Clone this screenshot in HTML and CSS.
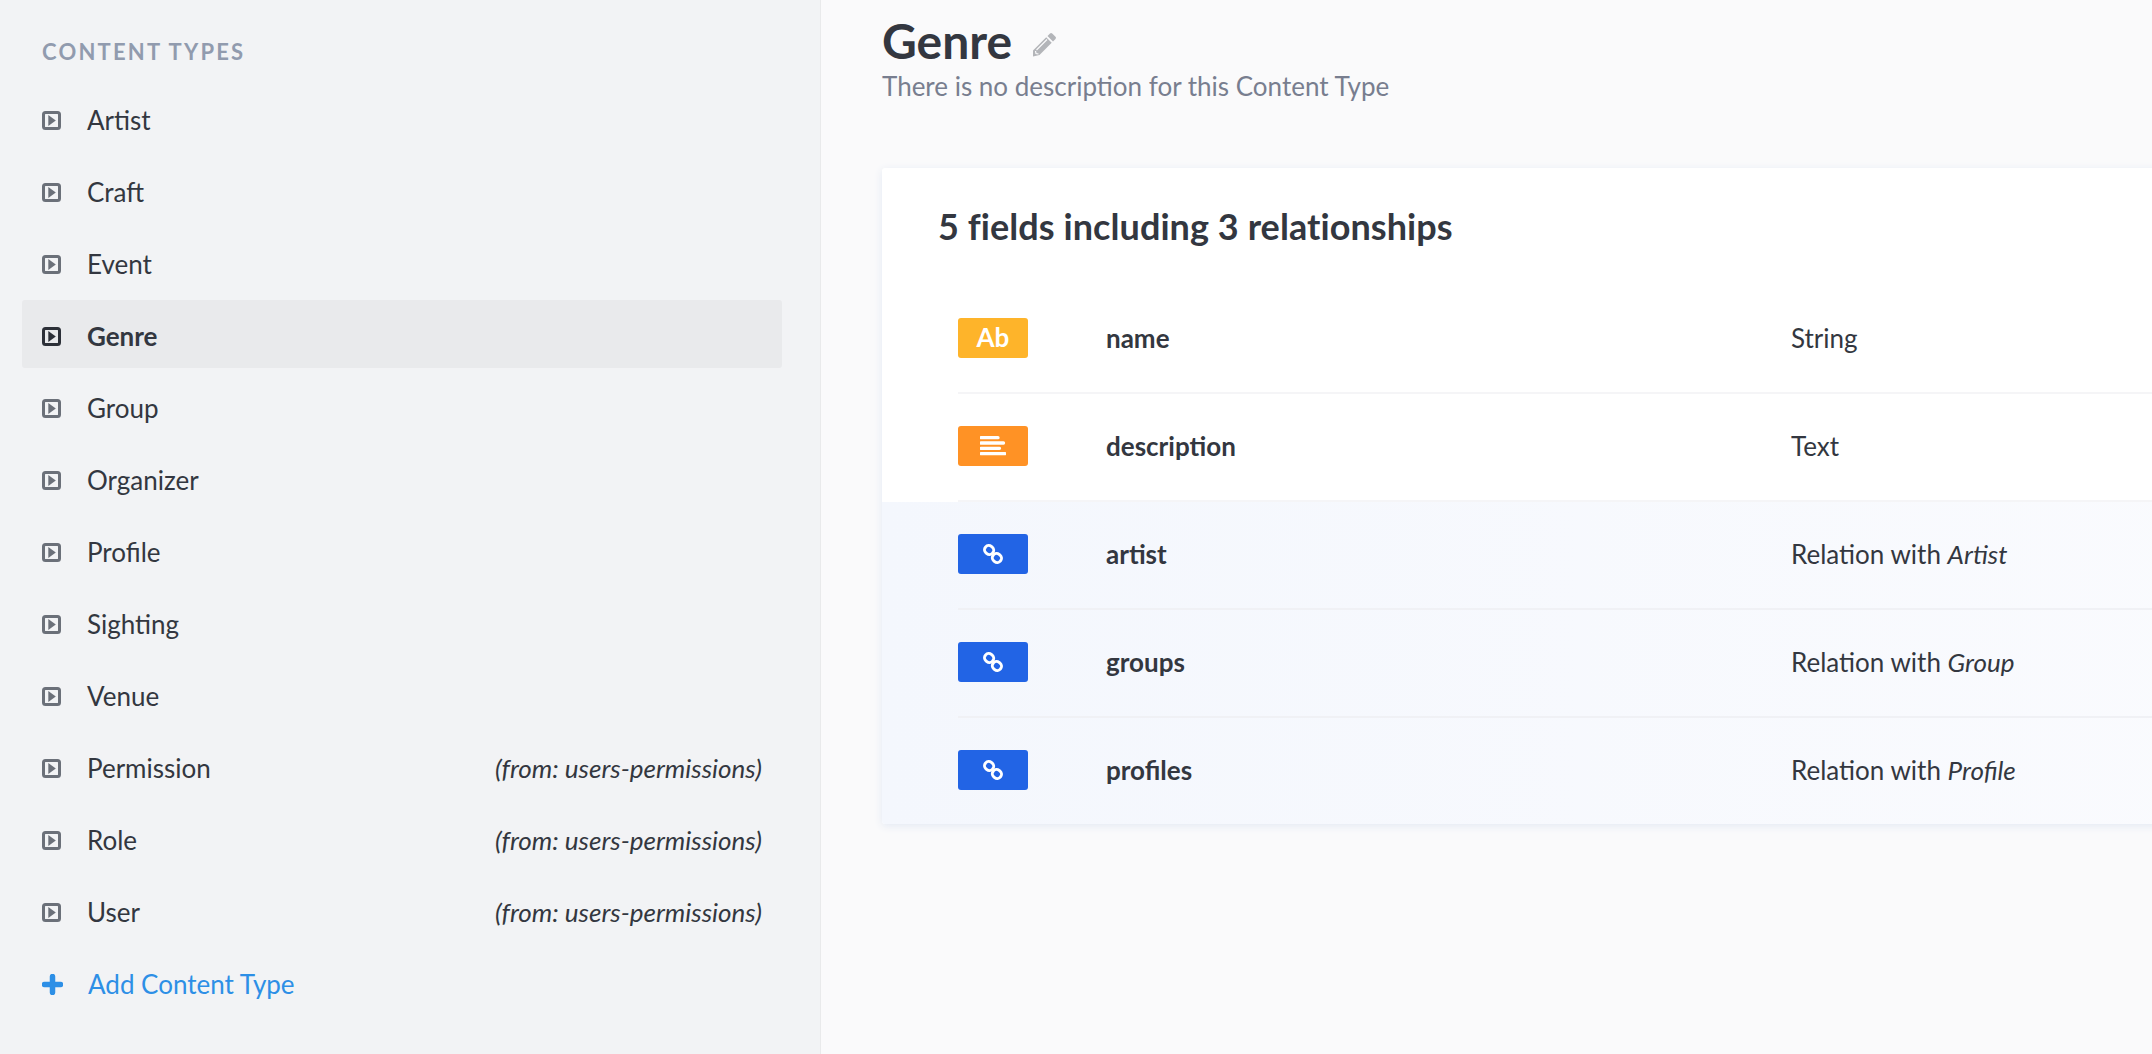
FILE: index.html
```html
<!DOCTYPE html>
<html lang="en">
<head>
    <meta charset="UTF-8">
    <title>Genre - Content Types</title>
    <link rel="stylesheet" href="styles.css">
</head>
<body>
    <svg class="sprites" width="0" height="0">
        <symbol id="play" viewBox="0 0 19 19">
            <rect x="1.5" y="1.5" width="16" height="16" rx="2" fill="none" stroke="currentColor" stroke-width="3"/>
            <path d="M6.3 4 L13.8 9.5 L6.3 15 Z" fill="currentColor"/>
        </symbol>
        <symbol id="chain" viewBox="0 0 20 20">
            <g fill="none" stroke="#fff" stroke-width="2.9">
                <rect x="1.5" y="1.8" width="9.2" height="8.4" rx="4" transform="rotate(40 6.1 6)"/>
                <rect x="9.3" y="9.8" width="9.2" height="8.4" rx="4" transform="rotate(40 13.9 14)"/>
            </g>
        </symbol>
    </svg>

    <div class="page">
        <aside class="sidebar">
            <h2 class="sidebar-title">Content Types</h2>
            <ul class="type-list">
                <li class="type-item"><svg class="play-icon"><use href="#play"/></svg><span>Artis<span class="no-lig">t</span></span></li>
                <li class="type-item"><svg class="play-icon"><use href="#play"/></svg><span>Craft</span></li>
                <li class="type-item"><svg class="play-icon"><use href="#play"/></svg><span>Event</span></li>
                <li class="type-item active"><svg class="play-icon"><use href="#play"/></svg><span>Genre</span></li>
                <li class="type-item"><svg class="play-icon"><use href="#play"/></svg><span>Group</span></li>
                <li class="type-item"><svg class="play-icon"><use href="#play"/></svg><span>Organizer</span></li>
                <li class="type-item"><svg class="play-icon"><use href="#play"/></svg><span>Profile</span></li>
                <li class="type-item"><svg class="play-icon"><use href="#play"/></svg><span>Sighting</span></li>
                <li class="type-item"><svg class="play-icon"><use href="#play"/></svg><span>Venue</span></li>
                <li class="type-item"><svg class="play-icon"><use href="#play"/></svg><span>Permission</span><em class="source">(from: users-permissions)</em></li>
                <li class="type-item"><svg class="play-icon"><use href="#play"/></svg><span>Role</span><em class="source">(from: users-permissions)</em></li>
                <li class="type-item"><svg class="play-icon"><use href="#play"/></svg><span>User</span><em class="source">(from: users-permissions)</em></li>
                <li class="type-item add-item">
                    <svg class="plus-icon" viewBox="0 0 21 21"><path d="M10.5 2.5 V18.5 M2.5 10.5 H18.5" stroke="currentColor" stroke-width="5.5" stroke-linecap="round"/></svg>
                    <span>Add Content Type</span>
                </li>
            </ul>
        </aside>

        <main class="content">
            <div class="title-row">
                <h1>Genre</h1>
                <svg class="pencil" viewBox="0 0 25 25">
                    <path d="M18 1.5 a1.6 1.6 0 0 1 2.2 0 L23.5 4.8 a1.6 1.6 0 0 1 0 2.2 L21 9.5 L15.5 4 Z M14.2 5.3 L19.7 10.8 L7.5 23 L1 24.5 L1 18.5 Z" fill="#b3b5b9"/>
                    <path d="M4.5 18 L15 7.5 M3.5 19 L4 21.5 L6.5 22" fill="none" stroke="#fafafb" stroke-width="1.2"/>
                </svg>
            </div>
            <p class="description">There is no description for this Content Type</p>

            <section class="card">
                <h3>5 fields including 3 relationships</h3>
                <div class="field">
                    <div class="field-inner">
                        <span class="badge badge-string">Ab</span>
                        <strong class="field-name">name</strong>
                        <span class="field-type">String</span>
                    </div>
                </div>
                <div class="field">
                    <div class="field-inner">
                        <span class="badge badge-text">
                            <svg class="lines" viewBox="0 0 26 20"><path d="M1 1.7 H18 M1 7 H23.5 M1 12.3 H19.5 M1 17.6 H25" stroke="#fff" stroke-width="3.3" stroke-linecap="round"/></svg>
                        </span>
                        <strong class="field-name">description</strong>
                        <span class="field-type">Text</span>
                    </div>
                </div>
                <div class="relations">
                    <div class="field relation">
                        <div class="field-inner">
                            <span class="badge badge-relation"><svg class="chain"><use href="#chain"/></svg></span>
                            <strong class="field-name">artis<span class="no-lig">t</span></strong>
                            <span class="field-type">Relation with <em>Artis<span class="no-lig">t</span></em></span>
                        </div>
                    </div>
                    <div class="field relation">
                        <div class="field-inner">
                            <span class="badge badge-relation"><svg class="chain"><use href="#chain"/></svg></span>
                            <strong class="field-name">groups</strong>
                            <span class="field-type">Relation with <em>Group</em></span>
                        </div>
                    </div>
                    <div class="field relation last">
                        <div class="field-inner">
                            <span class="badge badge-relation"><svg class="chain"><use href="#chain"/></svg></span>
                            <strong class="field-name">profiles</strong>
                            <span class="field-type">Relation with <em>Profile</em></span>
                        </div>
                    </div>
                </div>
            </section>
        </main>
    </div>
</body>
</html>
```

FILE: styles.css
```css
html, body {
    margin: 0;
    padding: 0;
    height: 100%;
    overflow: hidden;
}

body {
    font-family: Lato, "Open Sans", sans-serif;
    font-variant-ligatures: common-ligatures discretionary-ligatures;
    text-rendering: optimizeLegibility;
    color: #333740;
    background-color: #fafafb;
}

/* keeps the "st" pair apart while "ti" stays joined */
.no-lig {
    font-variant-ligatures: none;
}

.sprites {
    display: block;
    height: 0;
}

.page {
    display: flex;
    height: 1054px;
}

/* Sidebar */
.sidebar {
    width: 821px;
    flex-shrink: 0;
    background-color: #f2f3f5;
    border-right: 1px solid #e9eaeb;
    padding: 40px 18px 0 22px;
    box-sizing: border-box;
}

.sidebar-title {
    margin: 0 0 20px 20px;
    font-size: 22px;
    line-height: 24px;
    font-weight: 700;
    letter-spacing: 2.2px;
    text-transform: uppercase;
    color: #919bae;
}

.type-list {
    list-style: none;
    margin: 0;
    padding: 0;
    width: 760px;
}

.type-item {
    display: flex;
    align-items: center;
    box-sizing: border-box;
    height: 68px;
    margin-bottom: 4px;
    padding: 4px 20px 0;
    border-radius: 3px;
    font-size: 26px;
}

.play-icon {
    width: 19px;
    height: 19px;
    margin-right: 26px;
    flex-shrink: 0;
    color: #6b7079;
}

.type-item.active {
    background-color: #e9eaec;
    font-weight: 700;
}

.type-item.active .play-icon {
    color: #2c3038;
}

.source {
    margin-left: auto;
    font-size: 26px;
}

.add-item {
    color: #2d8fe6;
}

.plus-icon {
    width: 21px;
    height: 21px;
    margin-right: 25px;
    flex-shrink: 0;
}

/* Main */
.content {
    flex: 1;
    min-width: 0;
    padding: 13px 0 0 61px;
    overflow: hidden;
}

.title-row {
    display: flex;
    align-items: center;
    height: 56px;
}

h1 {
    margin: 0;
    font-size: 48px;
    line-height: 56px;
    font-weight: 700;
}

.pencil {
    width: 25px;
    height: 25px;
    margin: 6px 0 0 20px;
}

.description {
    margin: 2px 0 0;
    font-size: 26px;
    line-height: 30px;
    color: #787e8f;
}

.card {
    width: 1400px;
    margin-top: 67px;
    background-color: #fff;
    border-radius: 3px;
    box-shadow: 0 2px 8px #e3e9f3;
    overflow: hidden;
}

.card h3 {
    margin: 0;
    padding: 38px 0 0 56px;
    height: 80px;
    font-size: 36px;
    line-height: 40px;
    font-weight: 700;
    letter-spacing: 0.07px;
}

.field {
    height: 108px;
}

.field-inner {
    display: flex;
    align-items: center;
    box-sizing: border-box;
    height: 108px;
    margin-left: 76px;
    padding-bottom: 2px;
    border-bottom: 2px solid #f5f5f7;
}

.relations {
    background: linear-gradient(to right, #f4f7fd, #fafbfe);
}

.relation .field-inner {
    border-bottom-color: #f0f1f5;
}

.relation.last {
    height: 106px;
}

.relation.last .field-inner {
    height: 106px;
    border-bottom: none;
}

.badge {
    display: flex;
    align-items: center;
    justify-content: center;
    box-sizing: border-box;
    width: 70px;
    height: 40px;
    flex-shrink: 0;
    border-radius: 3px;
    color: #fff;
    font-size: 26px;
    font-weight: 700;
}

.badge-string {
    padding-bottom: 2px;
    background-color: #feb42a;
}

.badge-text {
    background-color: #ff9225;
}

.badge-relation {
    background-color: #2264e5;
}

.lines {
    width: 26px;
    height: 20px;
}

.chain {
    width: 20px;
    height: 20px;
}

.field-name {
    width: 685px;
    margin-left: 78px;
    font-size: 26px;
    font-weight: 700;
}

.field-type {
    font-size: 26px;
}
```
